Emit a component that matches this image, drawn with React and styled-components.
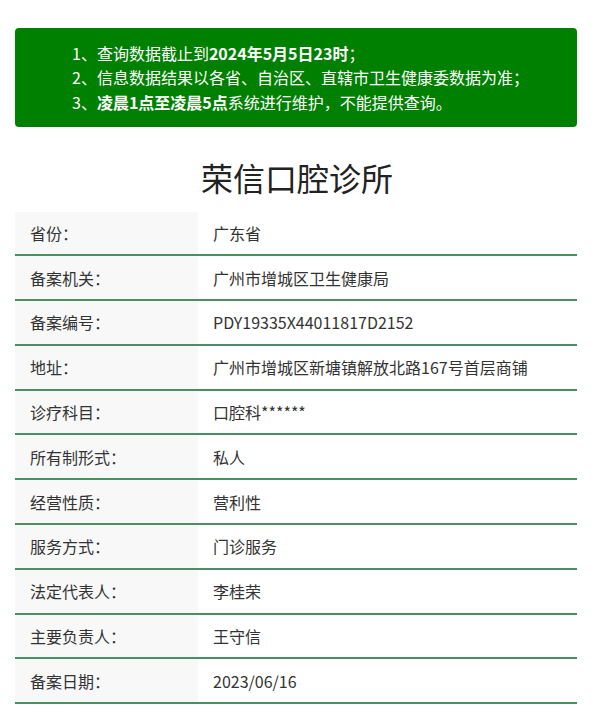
import React from "react";
import styled, { createGlobalStyle } from "styled-components";

const Global = createGlobalStyle`
  html, body { margin: 0; padding: 0; background: #fff; }
  body { font-family: "Noto Sans CJK SC", "Noto Sans", sans-serif; color: #333; }
`;

const Page = styled.div`
  width: 600px;
  padding: 28px 23px 0 15px;
  box-sizing: border-box;
`;

const Notice = styled.div`
  background: #008000;
  border-radius: 4px;
  padding: 12.5px 0 12.5px 57px;
  color: #fff;
  font-size: 16px;
  line-height: 24.5px;
`;

const NoticeLine = styled.div`
  white-space: nowrap;
`;

const B = styled.b`
  font-weight: 700;
`;

const Title = styled.h1`
  margin: 26px 0 11px;
  text-align: center;
  font-weight: 400;
  font-size: 32px;
  line-height: 48px;
  color: #222;
  padding-left: 2px;
`;

const Table = styled.div`
  display: flex;
  flex-direction: column;
`;

const Row = styled.div`
  display: grid;
  grid-template-columns: 183px 1fr;
  height: 42.8px;
  border-bottom: 2px solid #4a8f64;
  font-size: 16px;
`;

const Label = styled.div`
  background: #f8f8f8;
  display: flex;
  align-items: center;
  padding-left: 15px;
  color: #333;
`;

const Value = styled.div`
  display: flex;
  align-items: center;
  padding-left: 15px;
  color: #333;
`;

const rows = [
  ["省份：", "广东省"],
  ["备案机关：", "广州市增城区卫生健康局"],
  ["备案编号：", "PDY19335X44011817D2152"],
  ["地址：", "广州市增城区新塘镇解放北路167号首层商铺"],
  ["诊疗科目：", "口腔科******"],
  ["所有制形式：", "私人"],
  ["经营性质：", "营利性"],
  ["服务方式：", "门诊服务"],
  ["法定代表人：", "李桂荣"],
  ["主要负责人：", "王守信"],
  ["备案日期：", "2023/06/16"],
];

export default function App() {
  return (
    <>
      <Global />
      <Page>
        <Notice>
          <NoticeLine>1、查询数据截止到<B>2024年5月5日23时</B>；</NoticeLine>
          <NoticeLine>2、信息数据结果以各省、自治区、直辖市卫生健康委数据为准；</NoticeLine>
          <NoticeLine>3、<B>凌晨1点至凌晨5点</B>系统进行维护，不能提供查询。</NoticeLine>
        </Notice>
        <Title>荣信口腔诊所</Title>
        <Table>
          {rows.map(([k, v]) => (
            <Row key={k}>
              <Label>{k}</Label>
              <Value>{v}</Value>
            </Row>
          ))}
        </Table>
      </Page>
    </>
  );
}
